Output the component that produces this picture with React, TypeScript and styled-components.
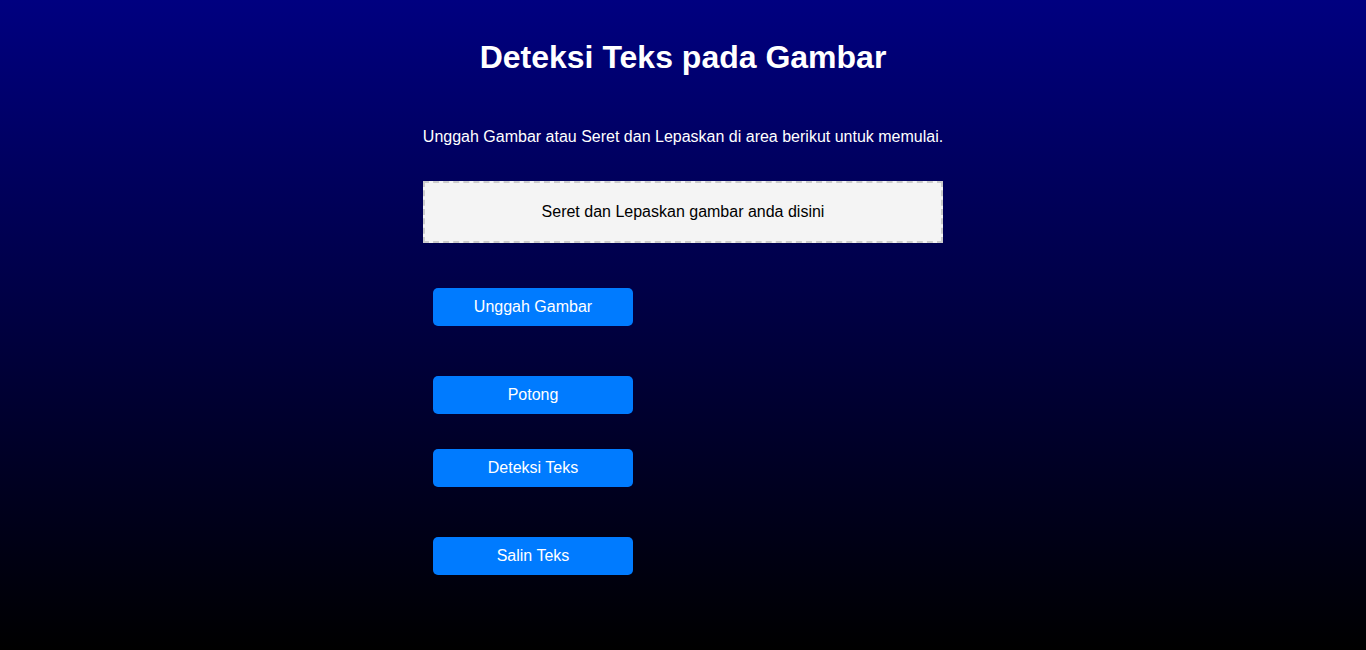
import React from "react";
import styled, { createGlobalStyle } from "styled-components";

const GlobalStyle = createGlobalStyle`
  html, body {
    margin: 0;
    padding: 0;
  }
  body {
    font-family: "Liberation Sans", Arial, sans-serif;
    background: linear-gradient(to bottom, #000080, #000000);
    min-height: 100vh;
    color: #ffffff;
  }
`;

const Page = styled.div`
  min-height: 100vh;
  box-sizing: border-box;
  padding-top: 39px;
  display: flex;
  flex-direction: column;
  align-items: center;
`;

const Title = styled.h1`
  margin: 0;
  font-size: 32px;
  font-weight: bold;
  color: #ffffff;
  text-align: center;
`;

const Container = styled.div`
  width: 520px;
  display: flex;
  flex-direction: column;
`;

const Intro = styled.p`
  margin: 52px -20px 35px;
  font-size: 16px;
  text-align: center;
  white-space: nowrap;
`;

const DropZone = styled.div`
  border: 2px dashed #cccccc;
  background-color: #f4f4f4;
  color: #000000;
  padding: 20px;
  font-size: 16px;
  text-align: center;
`;

const Button = styled.button<{ $top: number }>`
  width: 200px;
  height: 38px;
  margin: ${(p) => p.$top}px 0 0 10px;
  border: none;
  border-radius: 5px;
  background-color: #007bff;
  color: #ffffff;
  font-family: "Liberation Sans", Arial, sans-serif;
  font-size: 16px;
  cursor: pointer;
`;

const App = () => {
  return (
    <>
      <GlobalStyle />
      <Page>
        <Title>Deteksi Teks pada Gambar</Title>
        <Container>
          <Intro>Unggah Gambar atau Seret dan Lepaskan di area berikut untuk memulai.</Intro>
          <DropZone>Seret dan Lepaskan gambar anda disini</DropZone>
          <Button $top={45}>Unggah Gambar</Button>
          <Button $top={50}>Potong</Button>
          <Button $top={35}>Deteksi Teks</Button>
          <Button $top={50}>Salin Teks</Button>
        </Container>
      </Page>
    </>
  );
};

export default App;
